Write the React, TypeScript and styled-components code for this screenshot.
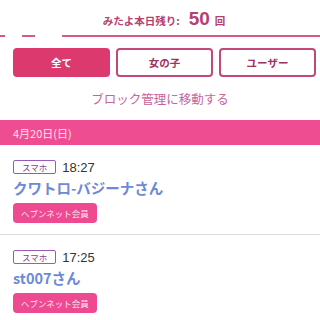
import React from "react";
import styled, { createGlobalStyle } from "styled-components";

const Global = createGlobalStyle`
  html, body { margin: 0; padding: 0; background: #fff; }
  body { font-family: "Noto Sans CJK JP", "Noto Sans", sans-serif; width: 320px; height: 320px; overflow: hidden; }
`;

const Page = styled.div`
  width: 320px;
  display: flex;
  flex-direction: column;
`;

const Remain = styled.div`
  display: flex;
  align-items: baseline;
  justify-content: center;
  gap: 5px;
  height: 35px;
  padding-top: 8px;
  padding-left: 8px;
  box-sizing: border-box;
  color: #b5416f;
  font-size: 10.5px;
  font-weight: 700;
`;

const Count = styled.span`
  font-family: "Liberation Sans", Arial, sans-serif;
  font-size: 19px;
  font-weight: 700;
  margin-left: 4px;
`;

const Rule = styled.div`
  height: 2px;
  background: linear-gradient(
    to right,
    #d55a88 0 5px,
    #fff 5px 22px,
    #d55a88 22px 35px,
    #fff 35px 62px,
    #d55a88 62px
  );
`;

const Tabs = styled.div`
  display: grid;
  grid-template-columns: repeat(3, 1fr);
  gap: 6px;
  padding: 11px 4px 0 13px;
`;

const Tab = styled.div<{ $active?: boolean }>`
  height: 29px;
  box-sizing: border-box;
  border-radius: 4px;
  display: flex;
  align-items: center;
  justify-content: center;
  font-size: 10.5px;
  font-weight: 700;
  border: 2px solid;
  background: ${(p) => (p.$active ? "#dc3a6f" : "#fff")};
  border-color: ${(p) => (p.$active ? "#dc3a6f" : "#c2487a")};
  color: ${(p) => (p.$active ? "#fff" : "#a0325f")};
`;

const BlockLink = styled.div`
  text-align: center;
  color: #c7649a;
  font-size: 12.5px;
  padding: 12px 0 11px;
  line-height: 20px;
`;

const DateBar = styled.div`
  height: 25px;
  background: #ef4d92;
  color: #fde4ef;
  font-size: 11px;
  display: flex;
  align-items: center;
  padding-left: 13px;
`;

const Item = styled.div<{ $last?: boolean }>`
  padding: 15px 13px 11px;
  border-bottom: ${(p) => (p.$last ? "none" : "1px solid #dcdcdc")};
  display: flex;
  flex-direction: column;
  align-items: flex-start;
`;

const Meta = styled.div`
  display: flex;
  align-items: center;
  gap: 6px;
  height: 14px;
`;

const Badge = styled.span`
  border: 1px solid #9a5ab5;
  border-radius: 2px;
  color: #7e3f9a;
  font-size: 8.5px;
  height: 14px;
  box-sizing: border-box;
  padding: 0 8px;
  display: flex;
  align-items: center;
`;

const Time = styled.span`
  font-family: "Liberation Sans", Arial, sans-serif;
  font-size: 13px;
  color: #333;
`;

const Name = styled.div`
  color: #6c8ad6;
  font-size: 14.5px;
  font-weight: 700;
  margin-top: 3px;
  line-height: 22px;
`;

const Member = styled.span`
  margin-top: 4px;
  background: #ee4a92;
  color: #fde6f0;
  font-size: 8.5px;
  height: 20px;
  padding: 0 8px;
  border-radius: 4px;
  display: flex;
  align-items: center;
`;

const items = [
  { time: "18:27", name: "クワトロ-バジーナさん" },
  { time: "17:25", name: "st007さん" },
];

export default function App() {
  return (
    <Page>
      <Global />
      <Remain>
        みたよ本日残り: <Count>50</Count> 回
      </Remain>
      <Rule />
      <Tabs>
        <Tab $active>全て</Tab>
        <Tab>女の子</Tab>
        <Tab>ユーザー</Tab>
      </Tabs>
      <BlockLink>ブロック管理に移動する</BlockLink>
      <DateBar>4月20日(日)</DateBar>
      {items.map((it, i) => (
        <Item key={i} $last={i === items.length - 1}>
          <Meta>
            <Badge>スマホ</Badge>
            <Time>{it.time}</Time>
          </Meta>
          <Name>{it.name}</Name>
          <Member>ヘブンネット会員</Member>
        </Item>
      ))}
    </Page>
  );
}
